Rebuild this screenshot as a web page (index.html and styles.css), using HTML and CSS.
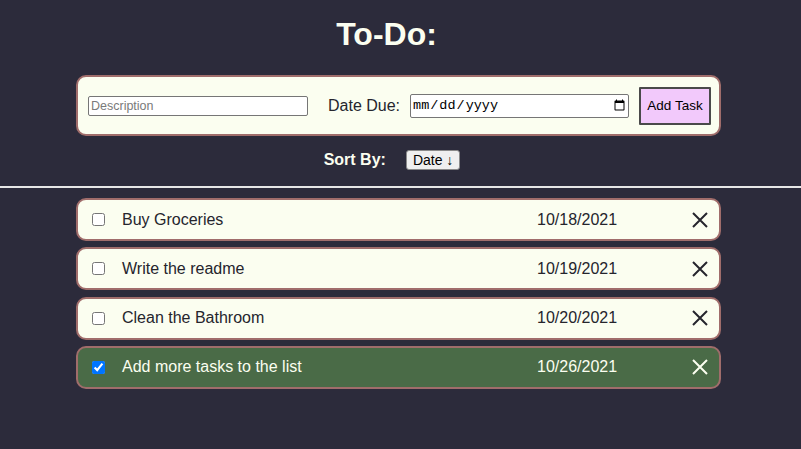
FILE: index.html
```html
<!DOCTYPE html>
<html lang="en">
<head>
<meta charset="utf-8">
<title>To-Do</title>
<link rel="stylesheet" href="styles.css">
</head>
<body>
  <header class="top">
    <h1 class="title">To-Do:</h1>
    <form class="card new-task">
      <input class="desc" type="text" placeholder="Description">
      <label class="due-label">Date Due:</label>
      <input class="due" type="date">
      <button class="add" type="button">Add Task</button>
    </form>
    <div class="sort">
      <span class="sort-label">Sort By:</span>
      <button class="sort-btn" type="button">Date ↓</button>
    </div>
  </header>
  <hr class="divider">
  <ul class="tasks">
    <li class="card task">
      <input class="check" type="checkbox">
      <span class="name">Buy Groceries</span>
      <span class="date">10/18/2021</span>
      <svg class="del" viewBox="0 0 20 20" width="20" height="20"><path d="M3 3 L17 17 M17 3 L3 17"/></svg>
    </li>
    <li class="card task">
      <input class="check" type="checkbox">
      <span class="name">Write the readme</span>
      <span class="date">10/19/2021</span>
      <svg class="del" viewBox="0 0 20 20" width="20" height="20"><path d="M3 3 L17 17 M17 3 L3 17"/></svg>
    </li>
    <li class="card task">
      <input class="check" type="checkbox">
      <span class="name">Clean the Bathroom</span>
      <span class="date">10/20/2021</span>
      <svg class="del" viewBox="0 0 20 20" width="20" height="20"><path d="M3 3 L17 17 M17 3 L3 17"/></svg>
    </li>
    <li class="card task done">
      <input class="check" type="checkbox" checked>
      <span class="name">Add more tasks to the list</span>
      <span class="date">10/26/2021</span>
      <svg class="del" viewBox="0 0 20 20" width="20" height="20"><path d="M3 3 L17 17 M17 3 L3 17"/></svg>
    </li>
  </ul>
</body>
</html>
```
FILE: styles.css
```css
* { box-sizing: border-box; }
html, body {
  margin: 0;
  padding: 0;
  background: #2c2b3b;
  font-family: "Liberation Sans", Arial, sans-serif;
  color: #fbfef0;
}
.top {
  display: flex;
  flex-direction: column;
  align-items: center;
}
.title {
  margin: 16px 0 0;
  padding-right: 28px;
  font-size: 32px;
  line-height: 37px;
  font-weight: bold;
  color: #fbfef0;
}
.card {
  width: 645px;
  margin-left: -4px;
  background: #fbfef0;
  border: 2px solid #a06d6b;
  border-radius: 10px;
  color: #25252d;
}
.new-task {
  margin-top: 22px;
  height: 61px;
  display: flex;
  align-items: center;
  padding: 0 8px 0 10px;
}
.desc {
  width: 220px;
  height: 20px;
  border: 1px solid #767676;
  border-radius: 2px;
  padding: 1px 2px;
  font-family: "Liberation Sans", Arial, sans-serif;
  font-size: 12.5px;
}
.desc::placeholder { color: #7a7a7a; }
.due-label {
  margin-left: 20px;
  font-size: 16px;
  color: #25252d;
}
.due {
  margin-left: 10px;
  width: 219px;
  height: 24px;
  border: 1px solid #767676;
  border-radius: 2px;
  font-family: "Liberation Mono", "Courier New", monospace;
  font-size: 13.5px;
  background: #fff;
}
.add {
  margin-left: 10px;
  width: 72px;
  height: 38px;
  background: #f2c9fb;
  border: 2px solid #4a4a4a;
  border-radius: 1px;
  font-family: "Liberation Sans", Arial, sans-serif;
  font-size: 13.5px;
  color: #000;
  padding: 0;
}
.sort {
  margin-top: 13px;
  display: flex;
  align-items: center;
  gap: 20px;
  padding-right: 17px;
  height: 22px;
}
.sort-label {
  font-weight: bold;
  font-size: 16px;
  color: #fbfef0;
}
.sort-btn {
  height: 20px;
  padding: 0 6px;
  background: #efefef;
  border: 1px solid #8a8a8a;
  border-radius: 3px;
  font-family: "Liberation Sans", Arial, sans-serif;
  font-size: 14px;
  color: #000;
}
.divider {
  margin: 15px 0 0;
  border: 0;
  border-top: 2px solid #e6e6e6;
}
.tasks {
  list-style: none;
  margin: 10px 0 0;
  padding: 0;
  display: flex;
  flex-direction: column;
  align-items: center;
  gap: 6.33px;
}
.task {
  margin-left: -4px;
  height: 43px;
  display: flex;
  align-items: center;
  padding: 0 9px 0 14px;
  font-size: 16px;
}
.check {
  margin: 0;
  width: 13px;
  height: 13px;
}
.name {
  margin-left: 17px;
  flex: 1;
}
.date {
  width: 153px;
}
.del {
  width: 20px;
  height: 20px;
  stroke: #25252d;
  stroke-width: 2;
  fill: none;
}
.task.done {
  background: #4a6b47;
  color: #fbfef0;
}
.task.done .del { stroke: #fbfef0; }
```
